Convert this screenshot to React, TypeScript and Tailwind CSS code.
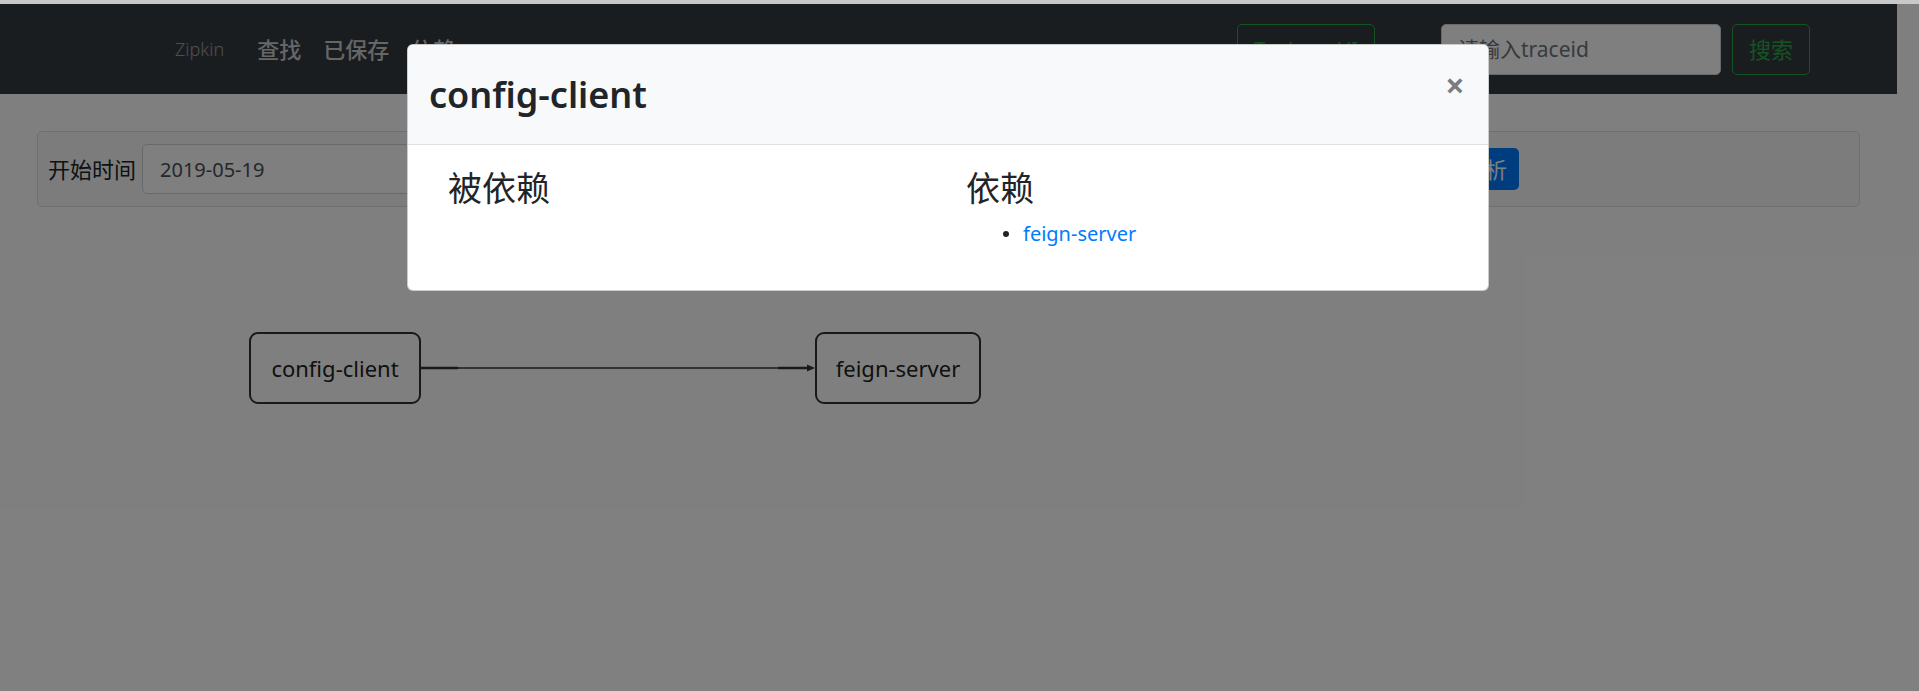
import React from "react";

const font = "font-['Noto_Sans','Noto_Sans_CJK_SC',sans-serif]";

interface DepNode {
  id: string;
  label: string;
  left: number;
  width: number;
}

const nodes: DepNode[] = [
  { id: "config-client", label: "config-client", left: 249, width: 172 },
  { id: "feign-server", label: "feign-server", left: 815, width: 166 },
];

const Navbar: React.FC = () => (
  <nav className="flex h-[90px] items-center bg-[#343a40] pl-[175px] pr-[87px]">
    <span className="text-[18px] font-light text-white/50">Zipkin</span>
    <ul className="ml-[22px] flex items-center">
      <li className="px-[11px] text-[22px] font-medium text-white/75">查找</li>
      <li className="px-[11px] text-[22px] font-medium text-white/75">已保存</li>
      <li className="px-[11px] text-[22px] font-medium text-white/75">依赖</li>
    </ul>
    <div className="ml-auto flex items-center">
      <button className="h-[50px] w-[138px] rounded-[5px] border border-[#28a745] text-[20px] text-[#28a745]">
        Try Lens UI
      </button>
      <input
        placeholder="请输入traceid"
        className="ml-[66px] h-[51px] w-[280px] rounded-[5px] border border-[#ced4da] bg-white px-[16px] text-[21px] text-[#495057] placeholder:text-[#6c757d]"
      />
      <button className="ml-[11px] h-[51px] w-[78px] rounded-[5px] border border-[#28a745] text-[22px] text-[#28a745]">
        搜索
      </button>
    </div>
  </nav>
);

const FilterBar: React.FC = () => (
  <div className="mx-[37px] mt-[37px] flex h-[76px] items-center rounded-[5px] border border-[#dfdfdf] bg-[#f8f9fa] pl-[10px]">
    <label className="text-[22px] text-[#212529]">开始时间</label>
    <input
      defaultValue="2019-05-19"
      className="ml-[6px] h-[50px] w-[600px] rounded-[5px] border border-[#ced4da] bg-white pl-[17px] pr-[16px] text-[20px] text-[#495057]"
    />
    <label className="ml-[10px] text-[22px] text-[#212529]">结束时间</label>
    <input
      defaultValue="2019-05-20"
      className="ml-[6px] h-[50px] w-[595px] rounded-[5px] border border-[#ced4da] bg-white px-[16px] text-[20px] text-[#495057]"
    />
    <button className="ml-[10px] h-[42px] w-[68px] rounded-[5px] bg-[#007bff] text-[22px] text-white">分析</button>
  </div>
);

const Graph: React.FC = () => (
  <div className="relative h-[480px]">
    {nodes.map((n) => (
      <div
        key={n.id}
        className="absolute top-[125px] flex h-[72px] items-center justify-center rounded-[9px] border-2 border-[#333] text-[22px] text-[#222]"
        style={{ left: n.left, width: n.width }}
      >
        {n.label}
      </div>
    ))}
    <svg className="absolute left-[421px] top-[151px]" width="394" height="20" viewBox="0 0 394 20">
      <line x1="0" y1="10" x2="388" y2="10" stroke="#333" strokeWidth="1.5" />
      <line x1="0" y1="10" x2="37" y2="10" stroke="#333" strokeWidth="2.5" />
      <line x1="357" y1="10" x2="388" y2="10" stroke="#333" strokeWidth="2.5" />
      <polygon points="386,6.5 394,10 386,13.5" fill="#333" />
    </svg>
  </div>
);

const DependencyModal: React.FC = () => (
  <div className="absolute left-[407px] top-[40px] w-[1082px] overflow-hidden rounded-[6px] border border-black/20 bg-white">
    <div className="flex h-[100px] items-center border-b border-[#dee2e6] bg-[#f8f9fa] pl-[21px] pr-[21px]">
      <h3 className="text-[36px] font-semibold leading-none text-[#212529]">config-client</h3>
      <button className="ml-auto mt-[23px] w-[24px] self-start text-[34px] font-bold leading-none text-black/50">×</button>
    </div>
    <div className="grid grid-cols-[518px_1fr] pb-[41px] pl-[40px] pt-[26px]">
      <div>
        <h3 className="text-[34px] leading-none text-[#212529]">被依赖</h3>
      </div>
      <div>
        <h3 className="text-[34px] leading-none text-[#212529]">依赖</h3>
        <ul className="mt-[14px]">
          <li className="flex h-[30px] items-center pl-[37px] text-[20px]">
            <span className="mr-[14px] h-[6px] w-[6px] rounded-full bg-[#212529]" />
            <a className="text-[#007bff]">feign-server</a>
          </li>
        </ul>
      </div>
    </div>
  </div>
);

export default function App() {
  return (
    <div className={`${font} h-[691px] overflow-hidden bg-white`}>
      <div className="h-[4px] bg-[#c8c8c8]" />
      <div className="relative h-[687px]">
        <div className="pr-[22px]">
          <Navbar />
          <FilterBar />
          <Graph />
        </div>
        <div className="absolute inset-0 bg-black/50" />
        <DependencyModal />
      </div>
    </div>
  );
}
